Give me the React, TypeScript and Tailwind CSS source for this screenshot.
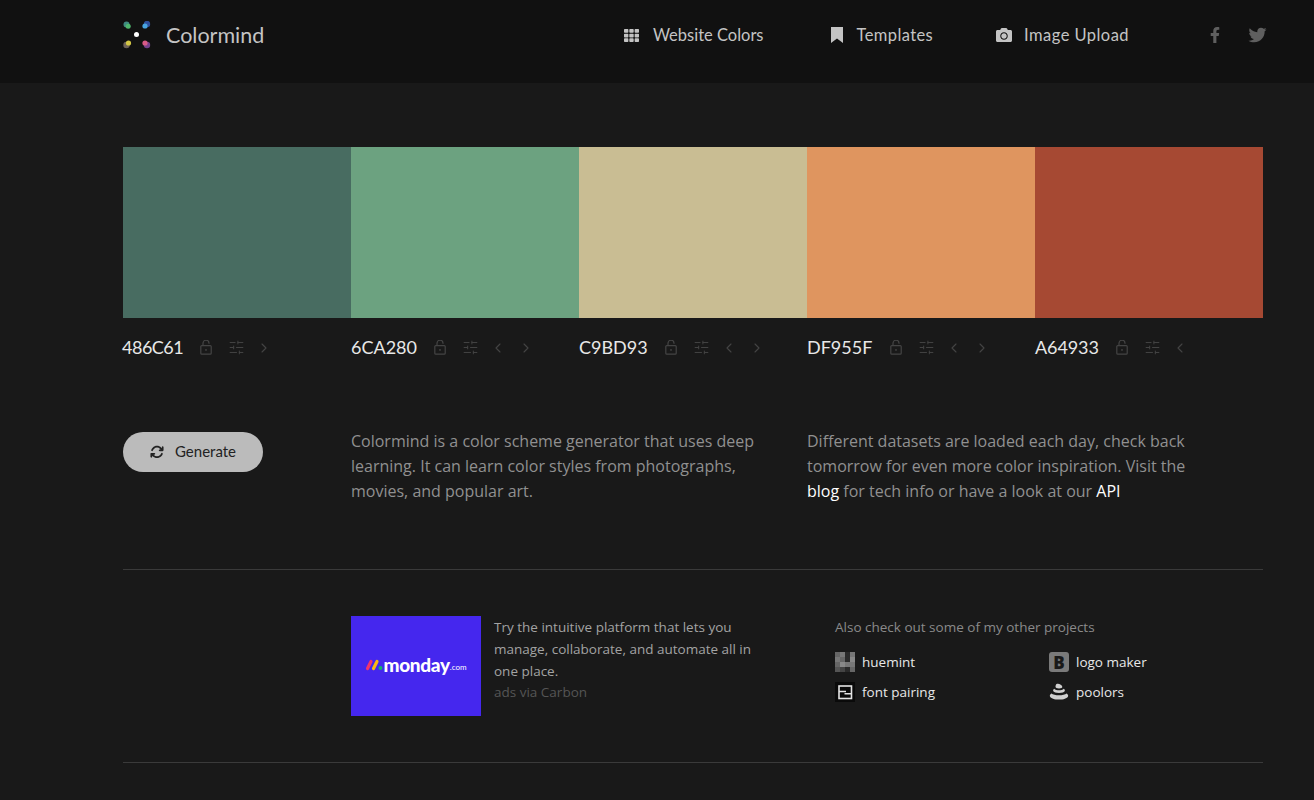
import { ChevronLeft, ChevronRight, SlidersHorizontal } from "lucide-react";
import { FaCamera, FaFacebookF, FaTh, FaTwitter } from "react-icons/fa";
import { FaArrowsRotate } from "react-icons/fa6";

const palette = [
  { hex: "486C61", left: false, right: true, text: "-ml-[1px] tracking-[-0.5px]" },
  { hex: "6CA280", left: true, right: true, text: "" },
  { hex: "C9BD93", left: true, right: true, text: "" },
  { hex: "DF955F", left: true, right: true, text: "mr-[1px]" },
  { hex: "A64933", left: true, right: false, text: "tracking-[-0.1px]" },
];

const swatches = ["bg-[#486c61]", "bg-[#6ca280]", "bg-[#c9bd93]", "bg-[#df955f]", "bg-[#a64933]"];

function Logo() {
  return (
    <svg width="28" height="28" viewBox="0 0 28 28">
      <circle cx="3.5" cy="3.5" r="3" fill="#3f8a80" />
      <circle cx="5.2" cy="5.2" r="2.5" fill="#4eb56c" />
      <circle cx="24" cy="3" r="3.2" fill="#2e4f9c" />
      <circle cx="22" cy="5" r="2.6" fill="#47a4e0" />
      <circle cx="3.5" cy="24" r="3.2" fill="#6e6258" />
      <circle cx="5.5" cy="22" r="2.6" fill="#d2c644" />
      <circle cx="24" cy="24" r="3.2" fill="#74408c" />
      <circle cx="22" cy="22" r="2.6" fill="#d85a86" />
      <circle cx="13.5" cy="13.5" r="2.5" fill="#ffffff" />
    </svg>
  );
}

function Bookmark() {
  return (
    <svg width="12" height="16" viewBox="0 0 12 16" fill="currentColor">
      <path d="M0 0h12v16L6 11.500 0 16z" />
    </svg>
  );
}

function LockIcon() {
  return (
    <svg width="12" height="15" viewBox="0 0 12 15" fill="none" stroke="#444" strokeWidth="1.2">
      <rect x="0.8" y="5.6" width="10.4" height="8.6" rx="1" />
      <path d="M3 5.6V3.2a3 3 0 0 1 6 0v.6" />
      <circle cx="6" cy="9.9" r="0.9" fill="#444" stroke="none" />
    </svg>
  );
}

function HueMint() {
  const cells = [
    "#666", "#777", "#2a2a2a", "#777",
    "#777", "#666", "#2a2a2a", "#888",
    "#666", "#888", "#777", "#777",
    "#555", "#444", "#2a2a2a", "#666",
  ];
  return (
    <div className="grid h-5 w-5 grid-cols-4">
      {cells.map((c, i) => (
        <div key={i} style={{ backgroundColor: c }} />
      ))}
    </div>
  );
}

function FontPairing() {
  return (
    <svg width="20" height="20" viewBox="0 0 20 20">
      <rect width="20" height="20" fill="#0a0a0a" />
      <rect x="4" y="4" width="12.5" height="12.5" fill="none" stroke="#e4e4e4" strokeWidth="1.6" />
      <path d="M4 9.500h7M9.500 11.800h7" stroke="#e4e4e4" strokeWidth="1.6" />
    </svg>
  );
}

function Poolors() {
  return (
    <svg width="20" height="20" viewBox="0 0 20 20" fill="#d0d0d0">
      <path d="M7.500 2c2.500-.8 5.300.9 5.800 2.700.2 1-1.200 1.700-3.300 1.700S6.600 5.800 6.500 4.700c0-1 .3-2.100 1-2.700z" />
      <path d="M5.200 6.700c1 1 3 1.500 4.800 1.500s3.800-.5 4.800-1.500c.9.600 1.200 1.500 1 2.200-.4 1.300-2.900 2-5.800 2s-5.400-.7-5.800-2c-.2-.7.100-1.600 1-2.200z" />
      <path d="M2.300 11.400c1.500 1.200 4.500 1.800 7.700 1.800s6.200-.6 7.700-1.800c1.200.8 1.800 2 1.300 3.100-.8 2-4.500 3.100-9 3.100s-8.200-1.100-9-3.100c-.5-1.100.1-2.300 1.300-3.100z" />
    </svg>
  );
}

export default function App() {
  return (
    <div className="h-[800px] overflow-hidden bg-[#191919] font-['Open_Sans',sans-serif]">
      {/* HEADER */}
      <header className="h-[83px] bg-[#111111] pl-[123px] pr-[47px]">
        <div className="flex h-[70px] items-center font-['Lato',sans-serif] text-[#c4c4c4]">
          <Logo />
          <span className="ml-[15px] text-[21.5px]">Colormind</span>
          <nav className="ml-auto flex items-center text-[16.5px]">
            <span className="flex items-center">
              <FaTh className="h-[15px] w-[15px]" />
              <span className="ml-[14px]">Website Colors</span>
            </span>
            <span className="ml-[67px] flex items-center">
              <Bookmark />
              <span className="ml-[14px] tracking-[0.4px]">Templates</span>
            </span>
            <span className="ml-[62px] flex items-center">
              <FaCamera className="h-[16px] w-[18px]" />
              <span className="ml-[11px] tracking-[0.45px]">Image Upload</span>
            </span>
            <span className="ml-[81px] flex items-center text-[#5f5f5f]">
              <FaFacebookF className="h-[16px] w-[10px]" />
              <FaTwitter className="ml-[28px] h-[18px] w-[19px]" />
            </span>
          </nav>
        </div>
      </header>

      <main className="ml-[123px] w-[1140px]">
        {/* PALETTE */}
        <div className="mt-[64px] grid grid-cols-5">
          {swatches.map((s) => (
            <div key={s} className={`h-[171px] ${s}`} />
          ))}
        </div>
        <div className="mt-[16px] grid h-[25px] grid-cols-5">
          {palette.map((c) => (
            <div key={c.hex} className="flex items-center text-[#444]">
              <span className={`font-['Lato',sans-serif] text-[18px] text-[#e8e8e8] ${c.text}`}>{c.hex}</span>
              <span className="ml-[17px] flex items-center">
                <LockIcon />
              </span>
              <SlidersHorizontal className="ml-[16px] h-[17px] w-[17px]" strokeWidth={1.4} />
              <div className="ml-[11px] flex gap-[12px]">
                {c.left && <ChevronLeft className="h-[16px] w-[16px]" strokeWidth={1.6} />}
                {c.right && <ChevronRight className="h-[16px] w-[16px]" strokeWidth={1.6} />}
              </div>
            </div>
          ))}
        </div>

        {/* INTRO */}
        <div className="mt-[70px] flex">
          <div className="w-[228px]">
            <button className="mt-[3px] flex h-[40px] w-[140px] items-center justify-center rounded-full bg-[#bbbbbb] font-['Lato',sans-serif] text-[15px] text-[#222]">
              <FaArrowsRotate className="h-[14px] w-[14px]" />
              <span className="mb-[1px] ml-[11px]">Generate</span>
            </button>
          </div>
          <p className="w-[456px] pr-[40px] text-[16px] leading-[25px] text-[#909090]">
            Colormind is a color scheme generator that uses deep learning. It can learn color styles from photographs,
            movies, and popular art.
          </p>
          <p className="w-[456px] pr-[60px] text-[16px] leading-[25px] text-[#909090]">
            Different datasets are loaded each day, check back tomorrow for even more color inspiration. Visit the{" "}
            <span className="text-white">blog</span> for tech info or have a look at our{" "}
            <span className="text-white">API</span>
          </p>
        </div>

        <hr className="mt-[65px] border-[#3a3a3a]" />

        {/* PROJECTS */}
        <div className="mt-[46px] flex pl-[228px]">
          <div className="flex h-[100px] w-[130px] items-center justify-center bg-[#4527ee] pb-[3px]">
            <svg width="18" height="12" viewBox="0 0 18 12">
              <path d="M2.500 9.500 6 2.500" stroke="#f0346c" strokeWidth="3.2" strokeLinecap="round" />
              <path d="M8.500 9.500 12 2.500" stroke="#fdb80f" strokeWidth="3.200" strokeLinecap="round" />
              <circle cx="15.500" cy="9" r="2" fill="#11b56a" />
            </svg>
            <span className="font-['Lato',sans-serif] text-[19px] font-black leading-none tracking-[-0.3px] text-white">
              monday
            </span>
            <span className="mt-[4px] font-['Lato',sans-serif] text-[8px] leading-none text-white">.com</span>
          </div>
          <div className="ml-[13px] w-[275px] text-[13.5px] leading-[22px] text-[#a3a3a3]">
            <p>Try the intuitive platform that lets you manage, collaborate, and automate all in one place.</p>
            <p className="-mt-[1px] text-[#555]">ads via Carbon</p>
          </div>
          <div className="ml-[66px] w-[330px] text-[13.5px]">
            <p className="leading-[22px] text-[#8a8a8a]">Also check out some of my other projects</p>
            <div className="mt-[14px] grid grid-cols-[214px_1fr] gap-y-[10px] text-[#e8e8e8]">
              <div className="flex h-5 items-center gap-[7px]">
                <HueMint />
                huemint
              </div>
              <div className="flex h-5 items-center gap-[7px]">
                <div className="flex h-5 w-5 items-center justify-center rounded-[3px] bg-[#7a7a7a] text-[17px] font-extrabold leading-none text-[#191919]">
                  B
                </div>
                logo maker
              </div>
              <div className="flex h-5 items-center gap-[7px]">
                <FontPairing />
                font pairing
              </div>
              <div className="flex h-5 items-center gap-[7px]">
                <Poolors />
                poolors
              </div>
            </div>
          </div>
        </div>

        <hr className="mt-[46px] border-[#3a3a3a]" />
      </main>
    </div>
  );
}
